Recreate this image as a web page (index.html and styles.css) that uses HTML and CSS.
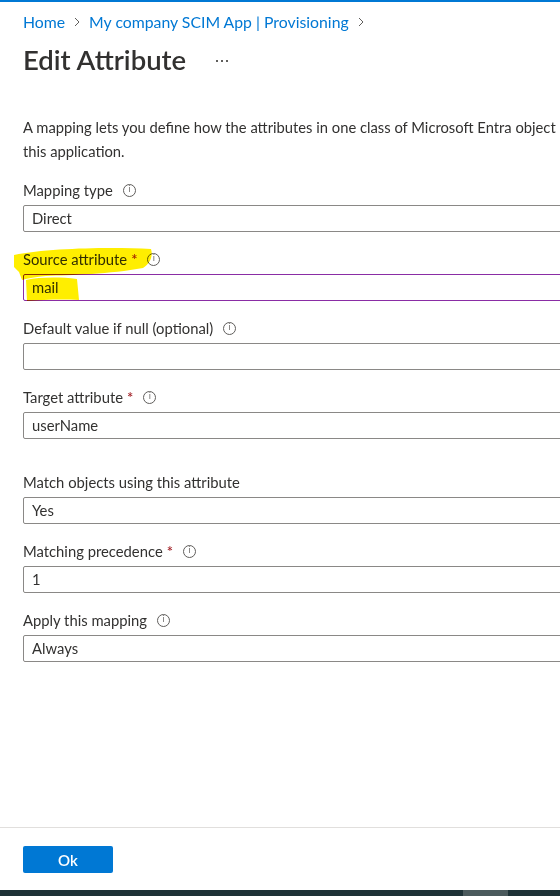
FILE: index.html
```html
<!DOCTYPE html>
<html>
<head>
<meta charset="utf-8">
<link rel="stylesheet" href="styles.css">
</head>
<body>
<div class="topline"></div>
<div class="page">
  <nav class="crumbs">
    <span class="crumb">Home</span>
    <svg class="chev" width="8" height="10" viewBox="0 0 8 10"><path d="M2 1 L6 5 L2 9" fill="none" stroke="#605e5c" stroke-width="1"/></svg>
    <span class="crumb">My company SCIM App | Provisioning</span>
    <svg class="chev" width="8" height="10" viewBox="0 0 8 10"><path d="M2 1 L6 5 L2 9" fill="none" stroke="#605e5c" stroke-width="1"/></svg>
  </nav>
  <div class="titlerow">
    <h1 class="title">Edit Attribute</h1>
    <span class="more"><i></i><i></i><i></i></span>
  </div>
  <p class="desc">A mapping lets you define how the attributes in one class of Microsoft Entra object<br>this application.</p>

  <div class="field">
    <div class="label">Mapping type <span class="info">i</span></div>
    <div class="input">Direct</div>
  </div>
  <div class="field">
    <div class="label">Source attribute <span class="req">*</span> <span class="info">i</span></div>
    <div class="input focus">mail</div>
  </div>
  <div class="field">
    <div class="label">Default value if null (optional) <span class="info">i</span></div>
    <div class="input"></div>
  </div>
  <div class="field">
    <div class="label">Target attribute <span class="req">*</span> <span class="info">i</span></div>
    <div class="input">userName</div>
  </div>
  <div class="field spaced">
    <div class="label">Match objects using this attribute</div>
    <div class="input">Yes</div>
  </div>
  <div class="field">
    <div class="label">Matching precedence <span class="req">*</span> <span class="info">i</span></div>
    <div class="input">1</div>
  </div>
  <div class="field">
    <div class="label">Apply this mapping <span class="info">i</span></div>
    <div class="input">Always</div>
  </div>
</div>
<div class="footer">
  <button class="ok">Ok</button>
</div>
<div class="taskbar"><span class="tb-item"></span></div>
<svg class="highlight" width="560" height="320" viewBox="0 0 560 320">
  <path d="M14 255 C50 248 110 247 151 249 C153 255 151 263 143 268 C110 274 72 275 46 276 C36 277 28 278 22 280 L19 272 L14 267 Z" fill="#ffee00"/>
  <path d="M26 280 C40 277 60 277 77 279 L79 300 C60 299 42 300 27 301 Z" fill="#ffee00"/>
</svg>
</body>
</html>
```

FILE: styles.css
```css
html, body {
  margin: 0;
  padding: 0;
  background: #ffffff;
  overflow: hidden;
}
body {
  width: 560px;
  height: 896px;
  position: relative;
  font-family: "Lato", "Liberation Sans", sans-serif;
  font-size: 14.8px;
  color: #323130;
}
.topline {
  height: 2px;
  background: #0078d4;
}
.page {
  padding: 10px 0 0 23px;
  height: 825px;
  box-sizing: border-box;
}
.crumbs {
  display: flex;
  align-items: center;
  gap: 6px;
  height: 20px;
  line-height: 20px;
  font-size: 15.8px;
  white-space: nowrap;
}
.crumb {
  color: #0078d4;
}
.chev {
  margin: 0 2px;
}
.titlerow {
  display: flex;
  align-items: center;
  height: 32px;
  margin-top: 12px;
}
.title {
  margin: 0;
  font-size: 27.5px;
  font-weight: 600;
  line-height: 32px;
  color: #323130;
}
.more {
  display: flex;
  gap: 3px;
  margin-left: 30px;
  margin-top: 2px;
}
.more i {
  width: 2px;
  height: 2px;
  background: #605e5c;
}
.desc {
  margin: 39px 0 0 0;
  font-size: 14.75px;
  line-height: 24px;
  white-space: nowrap;
}
.field {
  margin-top: 17px;
}
.field.spaced {
  margin-top: 33px;
}
.label {
  height: 20px;
  line-height: 20px;
  display: flex;
  align-items: center;
  white-space: nowrap;
}
.req {
  color: #a4262c;
  margin-left: 4px;
  font-weight: 600;
}
.info {
  display: inline-flex;
  align-items: center;
  justify-content: center;
  width: 11px;
  height: 11px;
  border: 1px solid #605e5c;
  border-radius: 50%;
  font-size: 8px;
  line-height: 1;
  color: #605e5c;
  margin-left: 10px;
  font-family: "DejaVu Sans", sans-serif;
}
.input {
  margin-top: 5px;
  height: 27px;
  box-sizing: border-box;
  width: 600px;
  border: 1px solid #8a8886;
  border-radius: 2px;
  padding: 0 8px;
  line-height: 25px;
  color: #323130;
}
.input.focus {
  border-color: #8a2da5;
}
.footer {
  border-top: 1px solid #e1dfdd;
  height: 63px;
  padding: 18px 0 0 23px;
  box-sizing: border-box;
}
.ok {
  display: block;
  width: 90px;
  height: 27px;
  background: #0078d4;
  border: none;
  border-radius: 2px;
  color: #ffffff;
  font-family: "Lato", "Liberation Sans", sans-serif;
  font-size: 15px;
  font-weight: 600;
  padding: 0;
}
.taskbar {
  position: absolute;
  left: 0;
  top: 890px;
  width: 560px;
  height: 6px;
  background: #1e3237;
}
.tb-item {
  position: absolute;
  left: 463px;
  width: 45px;
  height: 6px;
  background: #4b5a5d;
}
.highlight {
  position: absolute;
  left: 0;
  top: 0;
  mix-blend-mode: multiply;
  pointer-events: none;
}
```
